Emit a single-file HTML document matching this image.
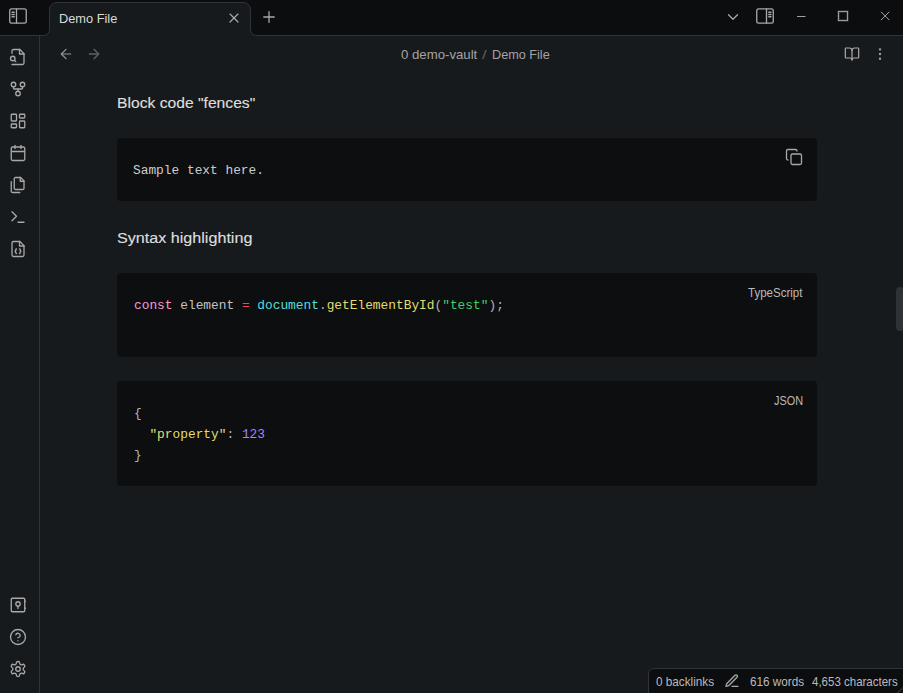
<!DOCTYPE html>
<html><head><meta charset="utf-8">
<style>
*{margin:0;padding:0;box-sizing:border-box}
html,body{width:903px;height:693px;overflow:hidden;background:#171a1d;font-family:"Liberation Sans",sans-serif;color:#dadada}
.t{position:absolute;white-space:pre;line-height:1;transform-origin:0 0}
.code{position:absolute;left:117px;width:700px;background:#0d0e10;border-radius:4px}
.m{position:absolute;white-space:pre;font-family:"Liberation Mono",monospace;font-size:14px;line-height:21px;color:#c4c4c4;transform:scale(0.917,0.92);transform-origin:0 14px}
#ov{position:absolute;left:0;top:0}
#ov .i{fill:none;stroke:#a8a8a8;stroke-width:1.75;stroke-linecap:round;stroke-linejoin:round}
.kw{color:#fa99cd}.op{color:#fb464c}.pr{color:#53dfdd}.fn{color:#e0de71}.st{color:#44cf6e}.pu{color:#b3b3b3}.va{color:#a882ff}
</style></head><body>

<!-- title bar + tab -->
<svg id="tb" width="903" height="40" style="position:absolute;left:0;top:0">
  <rect x="0" y="0" width="903" height="40" fill="#0c0d0f"/>
  <path d="M0 35.5 H43.5 A6 6 0 0 0 49.5 29.5 V9.5 A7 7 0 0 1 56.5 2.5 H243.5 A7 7 0 0 1 250.5 9.5 V29.5 A6 6 0 0 0 256.5 35.5 H903 V40 H0 Z" fill="#171a1d"/>
  <path d="M0 35.5 H43.5 A6 6 0 0 0 49.5 29.5 V9.5 A7 7 0 0 1 56.5 2.5 H243.5 A7 7 0 0 1 250.5 9.5 V29.5 A6 6 0 0 0 256.5 35.5 H903" fill="none" stroke="#30343a" stroke-width="1"/>
</svg>
<!-- ribbon border -->
<div style="position:absolute;left:39px;top:36px;width:1px;height:657px;background:#30343a"></div>

<div class="t" style="left:58.8px;top:12px;font-size:13px;color:#dadada;transform:scaleX(0.984)">Demo File</div>
<div class="t" style="left:400.8px;top:48px;font-size:13px;color:#a3a3a3;transform:scaleX(1.015)">0 demo-vault</div>
<div class="t" style="left:482px;top:48px;font-size:13px;color:#5c5f63;transform:scaleX(1.3)">/</div>
<div class="t" style="left:491.9px;top:48px;font-size:13px;color:#a3a3a3;transform:scaleX(0.974)">Demo File</div>

<div class="t" style="left:117px;top:95px;font-size:16px;color:#dedede;-webkit-text-stroke:0.15px #dedede;transform:scale(0.979,0.93);transform-origin:0 13px">Block code "fences"</div>
<div class="code" style="top:138px;height:63px"></div>
<div class="m" style="left:133.3px;top:160px;color:#cdcdcd">Sample text here.</div>

<div class="t" style="left:116.8px;top:230px;font-size:16px;color:#dedede;-webkit-text-stroke:0.15px #dedede;transform:scale(1.008,0.93);transform-origin:0 13px">Syntax highlighting</div>
<div class="code" style="top:273px;height:84px"></div>
<div class="t" style="left:747.8px;top:286px;font-size:13px;color:#bababa;transform:scaleX(0.887)">TypeScript</div>
<div class="m" style="left:133.5px;top:295px"><span class="kw">const</span> element <span class="op">=</span> <span class="pr">document</span><span class="pu">.</span><span class="fn">getElementById</span><span class="pu">(</span><span class="st">"test"</span><span class="pu">);</span></div>

<div class="code" style="top:381px;height:105px"></div>
<div class="t" style="left:774.1px;top:394px;font-size:13px;color:#bababa;transform:scaleX(0.838)">JSON</div>
<div class="m" style="left:133.5px;top:403px"><span class="pu">{</span></div>
<div class="m" style="left:133.5px;top:424px">  <span class="fn">"property"</span><span class="pu">:</span> <span class="va">123</span></div>
<div class="m" style="left:133.5px;top:445px"><span class="pu">}</span></div>

<!-- scrollbar -->
<div style="position:absolute;left:896px;top:287px;width:8px;height:44px;border-radius:4px;background:#2e3135"></div>

<!-- status bar -->
<div style="position:absolute;left:648px;top:668px;width:262px;height:30px;background:#0c0d0f;border:1px solid #30343a;border-radius:6px 0 0 0"></div>
<div class="t" style="left:656px;top:675px;font-size:13px;color:#bababa;transform:scaleX(0.903)">0 backlinks</div>
<div class="t" style="left:749.9px;top:675px;font-size:13px;color:#bababa;transform:scaleX(0.903)">616 words</div>
<div class="t" style="left:812.2px;top:675px;font-size:13px;color:#bababa;transform:scaleX(0.885)">4,653 characters</div>

<svg id="ov" width="903" height="693">
 <!-- left sidebar toggle (title bar) -->
 <g class="i" transform="translate(9,7) scale(0.75)">
  <rect x="1" y="2.6" width="22" height="18.8" rx="2.5"/><path d="M10 2.6v18.8"/><path d="M4 7h3M4 10h3M4 13h3"/>
 </g>
 <!-- tab close -->
 <g class="i" transform="translate(226,10) scale(0.667)"><path d="M18 6 6 18M6 6l12 12"/></g>
 <!-- new tab + -->
 <g class="i" transform="translate(260,8) scale(0.75)"><path d="M5 12h14M12 5v14"/></g>
 <!-- chevron down -->
 <g class="i" transform="translate(724,8) scale(0.75)"><path d="m6 9 6 6 6-6"/></g>
 <!-- right sidebar toggle -->
 <g class="i" transform="translate(756,7) scale(0.75)">
  <rect x="1" y="2.6" width="22" height="18.8" rx="2.5"/><path d="M14 2.6v18.8"/><path d="M17 7h3M17 10h3M17 13h3"/>
 </g>
 <!-- window controls -->
 <path d="M797 16.5h8.5" stroke="#a0a0a0" stroke-width="1" fill="none"/>
 <rect x="838.5" y="11.5" width="9" height="9" stroke="#3a3e42" stroke-width="2.2" fill="none"/>
 <rect x="838.5" y="11.5" width="9" height="9" stroke="#9c9c9c" stroke-width="1" fill="none"/>
 <path d="M881 11.8l8.3 8.3M889.3 11.8l-8.3 8.3" stroke="#a8a8a8" stroke-width="1" fill="none"/>

 <!-- nav arrows -->
 <g class="i" transform="translate(58,46) scale(0.667)" style="stroke-width:1.85;stroke:#969696"><path d="m12 19-7-7 7-7"/><path d="M19 12H5"/></g>
 <g class="i" transform="translate(86,46) scale(0.667)" style="stroke-width:2;stroke:#5e6166"><path d="M5 12h14"/><path d="m12 5 7 7-7 7"/></g>
 <!-- book-open -->
 <g class="i" transform="translate(844,46) scale(0.667)" style="stroke-width:1.85"><path d="M12 7v14"/><path d="M3 18a1 1 0 0 1-1-1V4a1 1 0 0 1 1-1h5a4 4 0 0 1 4 4 4 4 0 0 1 4-4h5a1 1 0 0 1 1 1v13a1 1 0 0 1-1 1h-6a3 3 0 0 0-3 3 3 3 0 0 0-3-3z"/></g>
 <!-- more vertical -->
 <g class="i" transform="translate(872,46) scale(0.667)" style="stroke-width:1.6;stroke:#a0a0a0"><circle cx="12" cy="12" r="1"/><circle cx="12" cy="5" r="1"/><circle cx="12" cy="19" r="1"/></g>

 <!-- ribbon icons -->
 <g class="i" transform="translate(9,48) scale(0.75)"><path d="M4 22h14a2 2 0 0 0 2-2V7.5L14.5 2H6a2 2 0 0 0-2 2v3"/><polyline points="14 2 14 8 20 8"/><circle cx="5" cy="14" r="3"/><path d="m9 18-1.5-1.5"/></g>
 <g class="i" transform="translate(9,80) scale(0.75)"><circle cx="12" cy="18" r="3"/><circle cx="6" cy="6" r="3"/><circle cx="18" cy="6" r="3"/><path d="M18 9v2c0 .6-.4 1-1 1H7c-.6 0-1-.4-1-1V9"/><path d="M12 12v3"/></g>
 <g class="i" transform="translate(9,112) scale(0.75)"><rect width="7" height="9" x="3" y="3" rx="1"/><rect width="7" height="5" x="14" y="3" rx="1"/><rect width="7" height="9" x="14" y="12" rx="1"/><rect width="7" height="5" x="3" y="16" rx="1"/></g>
 <g class="i" transform="translate(9,144) scale(0.75)"><rect x="3" y="4" width="18" height="18" rx="2"/><path d="M16 2v4M8 2v4M3.6 10h16.8"/></g>
 <g class="i" transform="translate(9,176) scale(0.75)"><path d="M15.5 2H8.6c-.4 0-.8.2-1.1.5-.3.3-.5.7-.5 1.1v12.8c0 .4.2.8.5 1.1.3.3.7.5 1.1.5h9.8c.4 0 .8-.2 1.1-.5.3-.3.5-.7.5-1.1V6.5L15.5 2z"/><path d="M3 7.6v12.8c0 .4.2.8.5 1.1.3.3.7.5 1.1.5h9.8"/><path d="M15 2v5h5"/></g>
 <g class="i" transform="translate(9,208) scale(0.75)"><polyline points="4 17 10 11 4 5"/><path d="M12 19h8"/></g>
 <g class="i" transform="translate(9,240) scale(0.75)"><path d="M14.5 2H6a2 2 0 0 0-2 2v16a2 2 0 0 0 2 2h12a2 2 0 0 0 2-2V7.5L14.5 2z"/><polyline points="14 2 14 8 20 8"/><path d="M10 12a1 1 0 0 0-1 1v1a1 1 0 0 1-1 1 1 1 0 0 1 1 1v1a1 1 0 0 0 1 1"/><path d="M14 18a1 1 0 0 0 1-1v-1a1 1 0 0 1 1-1 1 1 0 0 1-1-1v-1a1 1 0 0 0-1-1"/></g>

 <!-- ribbon bottom -->
 <g class="i" transform="translate(9,596) scale(0.75)"><rect x="3" y="3" width="18" height="18" rx="1.5"/><circle cx="12" cy="10.6" r="2.9"/><path d="M12 13.5v3"/><path d="M21 6.5l1 1M21 15.5l1 1"/></g>
 <g class="i" transform="translate(9,628) scale(0.75)"><circle cx="12" cy="12" r="10"/><path d="M9.09 9a3 3 0 0 1 5.83 1c0 2-3 3-3 3"/><path d="M12 17h.01"/></g>
 <g class="i" transform="translate(9,660) scale(0.75)"><path d="M12.22 2h-.44a2 2 0 0 0-2 2v.18a2 2 0 0 1-1 1.73l-.43.25a2 2 0 0 1-2 0l-.15-.08a2 2 0 0 0-2.73.73l-.22.38a2 2 0 0 0 .73 2.73l.15.1a2 2 0 0 1 1 1.72v.51a2 2 0 0 1-1 1.74l-.15.09a2 2 0 0 0-.73 2.73l.22.38a2 2 0 0 0 2.73.73l.15-.08a2 2 0 0 1 2 0l.43.25a2 2 0 0 1 1 1.73V20a2 2 0 0 0 2 2h.44a2 2 0 0 0 2-2v-.18a2 2 0 0 1 1-1.73l.43-.25a2 2 0 0 1 2 0l.15.08a2 2 0 0 0 2.73-.73l.22-.39a2 2 0 0 0-.73-2.73l-.15-.08a2 2 0 0 1-1-1.74v-.5a2 2 0 0 1 1-1.74l.15-.09a2 2 0 0 0 .73-2.73l-.22-.38a2 2 0 0 0-2.73-.73l-.15.08a2 2 0 0 1-2 0l-.43-.25a2 2 0 0 1-1-1.73V4a2 2 0 0 0-2-2z"/><circle cx="12" cy="12" r="3"/></g>

 <!-- copy icon -->
 <g class="i" transform="translate(785,148) scale(0.75)"><rect width="14" height="14" x="8" y="8" rx="2" ry="2"/><path d="M4 16c-1.1 0-2-.9-2-2V4c0-1.1.9-2 2-2h10c1.1 0 2 .9 2 2"/></g>
 <!-- pencil status -->
 <g class="i" transform="translate(724,673) scale(0.667)" style="stroke-width:2"><path d="M12 20h9"/><path d="M16.5 3.5a2.12 2.12 0 0 1 3 3L7 19l-4 1 1-4Z"/></g>
 <path d="M897 693.5l6.5-6.5" stroke="#2c2f33" stroke-width="1.5" fill="none"/>
</svg>
</body></html>
